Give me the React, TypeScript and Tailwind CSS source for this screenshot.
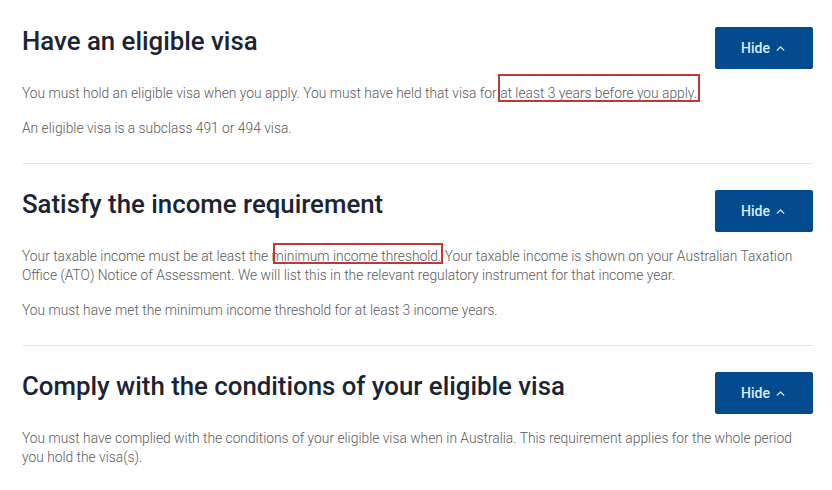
import { ChevronUp } from 'lucide-react';

const HideButton = () => (
    <button className="flex h-[42px] w-[98px] shrink-0 items-center justify-center gap-1 rounded-[2px] bg-[#044a8f] text-[14px] font-medium text-[#d8ecff]">
        Hide
        <ChevronUp size={13} strokeWidth={2.5} />
    </button>
);

// red annotation box drawn over the text
const Marked = ({ children, box }: { children: React.ReactNode; box: string }) => (
    <span className="relative">
        {children}
        <span className={`pointer-events-none absolute border-2 border-[#c0373a] ${box}`}></span>
    </span>
);

const Section = ({ title, children, last }: { title: string; children: React.ReactNode; last?: boolean }) => (
    <section className={`pt-[26px] pb-[25px] ${last ? '' : 'border-b border-[#e6e6e6]'}`}>
        <div className="flex items-start justify-between">
            <h2 className="text-[25.8px] font-medium leading-[29px] text-[#1b2433]">{title}</h2>
            <HideButton />
        </div>
        <div className="mt-[15px] space-y-[16px] text-[13.8px] font-light leading-[19px] text-[#5a5a5a]">
            {children}
        </div>
    </section>
);

export default function App() {
    return (
        <div className="min-h-screen bg-white font-['Roboto',sans-serif]">
            <div className="ml-[22px] w-[791px] pt-[1px]">
                <Section title="Have an eligible visa">
                    <p>
                        You must hold an eligible visa when you apply. You must have held that visa for{' '}
                        <Marked box="-left-[2px] -right-[3px] -top-[11px] -bottom-[1px]">at least 3 years before you apply.</Marked>
                    </p>
                    <p>An eligible visa is a subclass 491 or 494 visa.</p>
                </Section>

                <Section title="Satisfy the income requirement">
                    <p>
                        Your taxable income must be at least the{' '}
                        <Marked box="left-[1px] -right-[2px] -top-[5px] -bottom-[0px]">minimum income threshold.</Marked>{' '}
                        Your taxable income is shown on your Australian Taxation Office (ATO) Notice of Assessment. We will list this in the relevant regulatory instrument for that income year.
                    </p>
                    <p>You must have met the minimum income threshold for at least 3 income years.</p>
                </Section>

                <Section title="Comply with the conditions of your eligible visa" last>
                    <p>
                        You must have complied with the conditions of your eligible visa when in Australia. This requirement applies for the whole period you hold the visa(s).
                    </p>
                </Section>
            </div>
        </div>
    );
}
